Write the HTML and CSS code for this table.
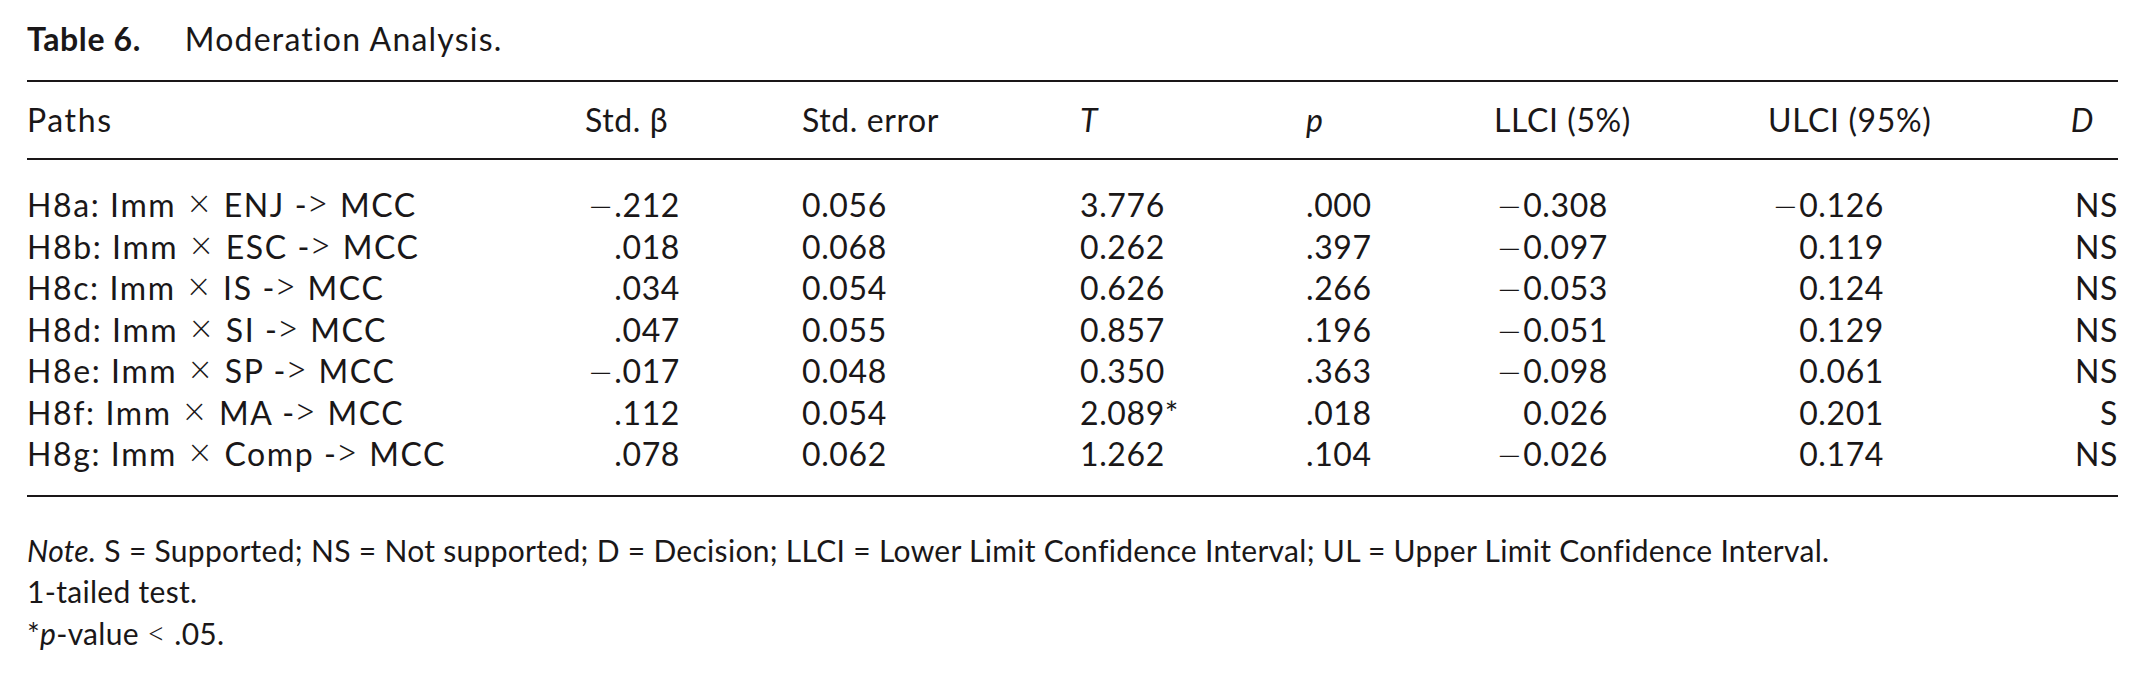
FILE: index.html
```html
<!DOCTYPE html>
<html lang="en">
<head>
<meta charset="utf-8">
<title>Table 6. Moderation Analysis.</title>
<link rel="stylesheet" href="styles.css">
</head>
<body>
<div class="page">
  <div class="caption"><span class="label">Table 6.</span><span class="caption-text">Moderation Analysis.</span></div>
  <div class="table">
    <div class="row head">
      <div class="c c-path">Paths</div>
      <div class="c c-beta">Std. β</div>
      <div class="c c-sp1"></div>
      <div class="c c-se">Std. error</div>
      <div class="c c-t"><i>T</i></div>
      <div class="c c-p"><i>p</i></div>
      <div class="c c-ll">LLCI (5%)</div>
      <div class="c c-sp2"></div>
      <div class="c c-ul">ULCI (95%)</div>
      <div class="c c-d"><i>D</i></div>
    </div>
    <div class="body">
      <div class="row">
        <div class="c c-path">H8a: Imm <span class="op">×</span> ENJ -<span class="gt">&gt;</span> MCC</div>
        <div class="c c-beta num"><span class="minus">−</span>.212</div>
        <div class="c c-sp1"></div>
        <div class="c c-se">0.056</div>
        <div class="c c-t">3.776</div>
        <div class="c c-p">.000</div>
        <div class="c c-ll num"><span class="minus">−</span>0.308</div>
        <div class="c c-sp2"></div>
        <div class="c c-ul num"><span class="minus">−</span>0.126</div>
        <div class="c c-d">NS</div>
      </div>
      <div class="row">
        <div class="c c-path">H8b: Imm <span class="op">×</span> ESC -<span class="gt">&gt;</span> MCC</div>
        <div class="c c-beta num">.018</div>
        <div class="c c-sp1"></div>
        <div class="c c-se">0.068</div>
        <div class="c c-t">0.262</div>
        <div class="c c-p">.397</div>
        <div class="c c-ll num"><span class="minus">−</span>0.097</div>
        <div class="c c-sp2"></div>
        <div class="c c-ul num">0.119</div>
        <div class="c c-d">NS</div>
      </div>
      <div class="row">
        <div class="c c-path">H8c: Imm <span class="op">×</span> IS -<span class="gt">&gt;</span> MCC</div>
        <div class="c c-beta num">.034</div>
        <div class="c c-sp1"></div>
        <div class="c c-se">0.054</div>
        <div class="c c-t">0.626</div>
        <div class="c c-p">.266</div>
        <div class="c c-ll num"><span class="minus">−</span>0.053</div>
        <div class="c c-sp2"></div>
        <div class="c c-ul num">0.124</div>
        <div class="c c-d">NS</div>
      </div>
      <div class="row">
        <div class="c c-path">H8d: Imm <span class="op">×</span> SI -<span class="gt">&gt;</span> MCC</div>
        <div class="c c-beta num">.047</div>
        <div class="c c-sp1"></div>
        <div class="c c-se">0.055</div>
        <div class="c c-t">0.857</div>
        <div class="c c-p">.196</div>
        <div class="c c-ll num"><span class="minus">−</span>0.051</div>
        <div class="c c-sp2"></div>
        <div class="c c-ul num">0.129</div>
        <div class="c c-d">NS</div>
      </div>
      <div class="row">
        <div class="c c-path">H8e: Imm <span class="op">×</span> SP -<span class="gt">&gt;</span> MCC</div>
        <div class="c c-beta num"><span class="minus">−</span>.017</div>
        <div class="c c-sp1"></div>
        <div class="c c-se">0.048</div>
        <div class="c c-t">0.350</div>
        <div class="c c-p">.363</div>
        <div class="c c-ll num"><span class="minus">−</span>0.098</div>
        <div class="c c-sp2"></div>
        <div class="c c-ul num">0.061</div>
        <div class="c c-d">NS</div>
      </div>
      <div class="row">
        <div class="c c-path">H8f: Imm <span class="op">×</span> MA -<span class="gt">&gt;</span> MCC</div>
        <div class="c c-beta num">.112</div>
        <div class="c c-sp1"></div>
        <div class="c c-se">0.054</div>
        <div class="c c-t">2.089*</div>
        <div class="c c-p">.018</div>
        <div class="c c-ll num">0.026</div>
        <div class="c c-sp2"></div>
        <div class="c c-ul num">0.201</div>
        <div class="c c-d">S</div>
      </div>
      <div class="row">
        <div class="c c-path">H8g: Imm <span class="op">×</span> Comp -<span class="gt">&gt;</span> MCC</div>
        <div class="c c-beta num">.078</div>
        <div class="c c-sp1"></div>
        <div class="c c-se">0.062</div>
        <div class="c c-t">1.262</div>
        <div class="c c-p">.104</div>
        <div class="c c-ll num"><span class="minus">−</span>0.026</div>
        <div class="c c-sp2"></div>
        <div class="c c-ul num">0.174</div>
        <div class="c c-d">NS</div>
      </div>
    </div>
  </div>
  <div class="notes">
    <p><i>Note.</i> S = Supported; NS = Not supported; D = Decision; LLCI = Lower Limit Confidence Interval; UL = Upper Limit Confidence Interval.</p>
    <p>1-tailed test.</p>
    <p>*<i>p</i>-value <span class="lt">&lt;</span> .05.</p>
  </div>
</div>
</body>
</html>
```

FILE: styles.css
```css
html, body {
  margin: 0;
  padding: 0;
  background: #ffffff;
}
body {
  font-family: "Lato", "Liberation Sans", sans-serif;
  color: #1a1718;
  font-size: 32px;
  letter-spacing: 0.6px;
}
.page {
  width: 2091px;
  padding: 22px 0 0 27px;
}
.caption {
  height: 34px;
  line-height: 34px;
  font-size: 32px;
}
.caption .label {
  font-weight: 700;
  margin-right: 44px;
}
.caption .caption-text {
  letter-spacing: 1.2px;
}
.table {
  margin-top: 24px;
  border-top: 2px solid #1a1718;
  border-bottom: 2px solid #1a1718;
}
.row {
  display: grid;
  grid-template-columns: 558px 95px 122px 278px 226px 188px 114px 160px 116px 1fr;
  height: 41.5px;
  line-height: 41.5px;
  white-space: nowrap;
}
.head {
  height: 76px;
  line-height: 76px;
  border-bottom: 2px solid #1a1718;
}
.body {
  padding: 24px 0 20px;
}
.c {
  overflow: visible;
}
.c-path {
  letter-spacing: 1.6px;
}
.op {
  font-weight: 300;
  font-size: 1.2em;
  line-height: 0;
  margin: 0 2px;
}
.gt {
  font-weight: 300;
  font-size: 1.2em;
  line-height: 0;
  margin-left: -2px;
}
.minus {
  font-family: "DejaVu Sans", sans-serif;
  font-weight: 300;
  font-size: 0.95em;
  line-height: 0;
  letter-spacing: 0;
  margin-right: 1px;
}
.num {
  text-align: right;
}
.head .c-beta, .head .c-ll, .head .c-ul {
  text-align: left;
}
.c-d {
  text-align: right;
}
.head .c-d {
  padding-right: 24px;
}
.notes {
  margin-top: 33px;
}
.notes p {
  margin: 0;
  height: 41.5px;
  line-height: 41.5px;
  font-size: 30px;
  letter-spacing: 0.3px;
}
.lt {
  font-weight: 300;
  font-size: 1.1em;
  line-height: 0;
}
```
